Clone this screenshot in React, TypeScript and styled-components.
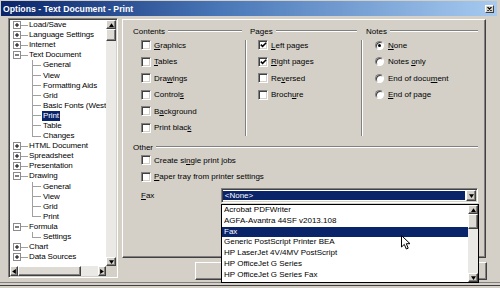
import React from "react";
import styled, { createGlobalStyle } from "styled-components";

const GlobalStyle = createGlobalStyle`
  html, body { margin: 0; padding: 0; }
  body {
    background: #d4d0c8;
    font-family: "Liberation Sans", Arial, sans-serif;
    font-size: 8px;
    color: #000;
  }
`;

const Window = styled.div`
  position: relative;
  width: 500px;
  height: 288px;
  overflow: hidden;
  background: #d4d0c8;
  display: flex;
  flex-direction: column;
  box-sizing: border-box;
  padding-top: 1px;
`;

const TitleBar = styled.div`
  height: 15px;
  margin: 0 3px 0 1px;
  display: flex;
  align-items: center;
  justify-content: space-between;
  padding: 0 3px 0 2px;
  background: linear-gradient(to right, #0a246a 0%, #4a78b8 45%, #a6caf0 100%);
  color: #fff;
  font-weight: bold;
  font-size: 8.7px;
`;

const CloseButton = styled.span`
  width: 9px;
  height: 8px;
  box-sizing: border-box;
  background: #d4d0c8;
  border: 1px solid;
  border-color: #fff #404040 #404040 #fff;
  display: flex;
  align-items: center;
  justify-content: center;
`;

const Body = styled.div`
  height: 266px;
  display: flex;
  align-items: flex-start;
  gap: 4px;
  padding: 2px 0 0 8px;
  box-sizing: border-box;
`;

const BottomEdge = styled.div`
  height: 2px;
  border-top: 1px solid #808080;
  border-bottom: 1px solid #404040;
`;

/* ---------- tree ---------- */

const TreePanel = styled.div`
  width: 110px;
  height: 260px;
  box-sizing: border-box;
  border: 1px solid;
  border-color: #808080 #fff #fff #808080;
  box-shadow: inset 1px 1px 0 #404040, inset -1px -1px 0 #d4d0c8;
  background: #fff;
  padding: 1px;
  display: grid;
  grid-template-columns: 1fr 10px;
  grid-template-rows: 1fr 10px;
`;

const TreeList = styled.div`
  overflow: hidden;
  white-space: nowrap;
`;

const TreeRow = styled.div<{ $child?: boolean }>`
  height: 10.1px;
  display: flex;
  align-items: center;
  padding-left: ${(p) => (p.$child ? "22px" : "3px")};
`;

const Expander = styled.span`
  width: 8px;
  height: 8px;
  box-sizing: border-box;
  border: 1px solid #8c8c8c;
  background: #fff;
  flex: none;
  display: flex;
  align-items: center;
  justify-content: center;
`;

const Stub = styled.span`
  width: 7px;
  height: 1px;
  background: #a0a0a0;
  flex: none;
`;

const Connector = styled.span<{ $last?: boolean }>`
  width: 9px;
  height: 100%;
  flex: none;
  background:
    linear-gradient(#a0a0a0, #a0a0a0) left top / 1px ${(p) => (p.$last ? "50%" : "100%")} no-repeat,
    linear-gradient(#a0a0a0, #a0a0a0) left center / 100% 1px no-repeat;
`;

const NodeText = styled.span<{ $selected?: boolean; $child?: boolean }>`
  margin-left: ${(p) => (p.$child ? "1px" : "0")};
  padding: 0 1px;
  line-height: 10px;
  letter-spacing: -0.1px;
  background: ${(p) => (p.$selected ? "#0a246a" : "transparent")};
  color: ${(p) => (p.$selected ? "#fff" : "#000")};
`;

const ScrollBtn = styled.span`
  box-sizing: border-box;
  background: #d4d0c8;
  border: 1px solid;
  border-color: #fff #404040 #404040 #fff;
  box-shadow: inset -1px -1px 0 #808080;
  flex: none;
  display: flex;
  align-items: center;
  justify-content: center;
`;

const VScroll = styled.div`
  display: flex;
  flex-direction: column;
  background: #ebe9e5;
`;

const HScroll = styled.div`
  display: flex;
  background: #ebe9e5;
`;

const VBtn = styled(ScrollBtn)`
  height: 9px;
  width: 100%;
`;

const HBtn = styled(ScrollBtn)`
  width: 8px;
  height: 100%;
`;

const Thumb = styled(ScrollBtn)<{ $size: number; $vertical?: boolean }>`
  ${(p) => (p.$vertical ? `height: ${p.$size}px; width: 100%;` : `width: ${p.$size}px; height: 100%;`)}
  background: #dedbd5;
`;

const Track = styled.span`
  flex: 1;
`;

const Corner = styled.div`
  background: #d4d0c8;
`;

/* ---------- right side ---------- */

const RightColumn = styled.div`
  width: 364px;
  display: flex;
  flex-direction: column;
`;

const Panel = styled.div`
  height: 239px;
  margin-top: 1px;
  box-sizing: border-box;
  border: 1px solid;
  border-color: #fff #404040 #404040 #fff;
  box-shadow: inset -1px -1px 0 #808080;
  padding: 6px 7px 0 10px;
  display: flex;
  flex-direction: column;
`;

const Groups = styled.div`
  display: grid;
  grid-template-columns: 109px 8px 107px 9px 1fr;
  grid-template-rows: 10px auto;
`;

const GroupHeader = styled.div<{ $col?: number }>`
  grid-column: ${(p) => p.$col ?? "auto"};
  display: flex;
  align-items: center;
  height: 10px;
`;

const EtchedLine = styled.span`
  flex: 1;
  height: 0;
  margin-left: 3px;
  border-top: 1px solid #808080;
  border-bottom: 1px solid #fff;
`;

const Separator = styled.div<{ $col: number }>`
  grid-row: 2;
  grid-column: ${(p) => p.$col};
  margin-top: 4px;
  display: flex;
  justify-content: center;
  &::before {
    content: "";
    width: 0;
    border-left: 1px solid #808080;
    border-right: 1px solid #fff;
  }
`;

const GroupBody = styled.div<{ $col: number }>`
  grid-row: 2;
  grid-column: ${(p) => p.$col};
  padding-top: 1px;
  display: flex;
  flex-direction: column;
`;

const OptionRow = styled.div<{ $indent?: number }>`
  height: 16.5px;
  display: flex;
  align-items: center;
  gap: 3px;
  padding-left: ${(p) => p.$indent ?? 8}px;
  white-space: nowrap;
`;

const Box = styled.span`
  width: 10px;
  height: 10px;
  box-sizing: border-box;
  flex: none;
  border: 1px solid;
  border-color: #808080 #fff #fff #808080;
  box-shadow: inset 1px 1px 0 #404040, inset -1px -1px 0 #d4d0c8;
  background: #fff;
  display: flex;
  align-items: center;
  justify-content: center;
`;

const Radio = styled.span<{ $on?: boolean }>`
  width: 9px;
  height: 9px;
  box-sizing: border-box;
  flex: none;
  border-radius: 50%;
  border: 1px solid;
  border-color: #808080 #fff #fff #808080;
  box-shadow: inset 1px 1px 0 #404040;
  background: #fff;
  display: flex;
  align-items: center;
  justify-content: center;
  margin-right: 1px;
  &::after {
    content: "";
    width: 3px;
    height: 3px;
    border-radius: 50%;
    background: ${(p) => (p.$on ? "#000" : "transparent")};
  }
`;

const OtherSection = styled.div`
  margin-top: 6px;
  display: flex;
  flex-direction: column;
`;

const FaxRow = styled.div`
  margin-top: 3px;
  height: 15px;
  display: flex;
  align-items: center;
`;

const FaxLabel = styled.span`
  width: 88px;
  padding-left: 8px;
  box-sizing: border-box;
`;

const Combo = styled.div`
  width: 258px;
  height: 15px;
  box-sizing: border-box;
  border: 1px solid;
  border-color: #808080 #fff #fff #808080;
  box-shadow: inset 1px 1px 0 #404040, inset -1px -1px 0 #d4d0c8;
  background: #fff;
  padding: 1px;
  display: flex;
`;

const ComboValue = styled.span`
  flex: 1;
  margin: 1px 1px 1px 0;
  background: #0a246a;
  color: #fff;
  padding-left: 2px;
  line-height: 10px;
`;

const ComboBtn = styled(ScrollBtn)`
  width: 10px;
  height: 100%;
`;

const ButtonRow = styled.div`
  margin-top: 4px;
  display: flex;
  justify-content: flex-end;
  gap: 4px;
  margin-right: -1px;
`;

/* the dialog's OK / Cancel / Help / Back buttons, all hidden under the open list */
const DialogButton = styled.span`
  width: 70px;
  height: 18px;
  box-sizing: border-box;
  border: 1px solid;
  border-color: #fff #404040 #404040 #fff;
  box-shadow: inset -1px -1px 0 #808080;
`;

/* ---------- dropdown list (popup over the dialog) ---------- */

const DropList = styled.div`
  position: absolute;
  left: 221px;
  top: 204px;
  width: 258px;
  height: 79px;
  box-sizing: border-box;
  border: 1px solid #000;
  background: #fff;
  display: flex;
`;

const Items = styled.div`
  flex: 1;
  overflow: hidden;
  white-space: nowrap;
`;

const Item = styled.div<{ $selected?: boolean }>`
  height: 10.8px;
  line-height: 10.8px;
  padding-left: 2px;
  background: ${(p) => (p.$selected ? "#0a246a" : "transparent")};
  color: ${(p) => (p.$selected ? "#fff" : "#000")};
`;

const ListScroll = styled(VScroll)`
  width: 10px;
`;

const Cursor = styled.svg`
  position: absolute;
  left: 401px;
  top: 235px;
`;

const Arrow = ({ dir }: { dir: "up" | "down" | "left" | "right" }) => {
  const pts = {
    up: "0,3 2,0 4,3",
    down: "0,0 4,0 2,3",
    left: "3,0 3,4 0,2",
    right: "0,0 0,4 3,2",
  }[dir];
  const vertical = dir === "up" || dir === "down";
  return (
    <svg width={vertical ? 5 : 4} height={vertical ? 4 : 5} viewBox={vertical ? "0 0 4 3" : "0 0 3 4"}>
      <polygon points={pts} fill="#000" />
    </svg>
  );
};

const Check = () => (
  <svg width="7" height="6" viewBox="0 0 7 6">
    <path d="M0.8 2.6 L2.6 4.4 L6.2 0.8" stroke="#000" strokeWidth="1.5" fill="none" />
  </svg>
);

const PlusMinus = ({ open }: { open: boolean }) => (
  <svg width="6" height="6" viewBox="0 0 6 6">
    <rect x="1" y="2.5" width="4" height="1" fill="#000" />
    {!open && <rect x="2.5" y="1" width="1" height="4" fill="#000" />}
  </svg>
);

type Node = { label: string; open?: boolean; children?: string[] };

const tree: Node[] = [
  { label: "Load/Save" },
  { label: "Language Settings" },
  { label: "Internet" },
  {
    label: "Text Document",
    open: true,
    children: ["General", "View", "Formatting Aids", "Grid", "Basic Fonts (Weste", "Print", "Table", "Changes"],
  },
  { label: "HTML Document" },
  { label: "Spreadsheet" },
  { label: "Presentation" },
  { label: "Drawing", open: true, children: ["General", "View", "Grid", "Print"] },
  { label: "Formula", open: true, children: ["Settings"] },
  { label: "Chart" },
  { label: "Data Sources" },
];

const faxList = [
  "Acrobat PDFWriter",
  "AGFA-Avantra 44SF v2013.108",
  "Fax",
  "Generic PostScript Printer BEA",
  "HP LaserJet 4V/4MV PostScript",
  "HP OfficeJet G Series",
  "HP OfficeJet G Series Fax",
];

function Option({ checked, children }: { checked?: boolean; children: React.ReactNode }) {
  return (
    <OptionRow>
      <Box>{checked && <Check />}</Box>
      <span>{children}</span>
    </OptionRow>
  );
}

function RadioOption({ on, children }: { on?: boolean; children: React.ReactNode }) {
  return (
    <OptionRow $indent={9}>
      <Radio $on={on} />
      <span>{children}</span>
    </OptionRow>
  );
}

export default function App() {
  return (
    <>
      <GlobalStyle />
      <Window>
        <TitleBar>
          <span>Options - Text Document - Print</span>
          <CloseButton>
            <svg width="5" height="4" viewBox="0 0 5 4">
              <path d="M0.5 0 L4.5 4 M4.5 0 L0.5 4" stroke="#000" strokeWidth="1.1" />
            </svg>
          </CloseButton>
        </TitleBar>

        <Body>
          <TreePanel>
            <TreeList>
              {tree.map((node) => (
                <React.Fragment key={node.label}>
                  <TreeRow>
                    <Expander>
                      <PlusMinus open={!!node.open} />
                    </Expander>
                    <Stub />
                    <NodeText>{node.label}</NodeText>
                  </TreeRow>
                  {node.children?.map((child, i) => (
                    <TreeRow $child key={node.label + child}>
                      <Connector $last={i === node.children!.length - 1} />
                      <NodeText $child $selected={node.label === "Text Document" && child === "Print"}>
                        {child}
                      </NodeText>
                    </TreeRow>
                  ))}
                </React.Fragment>
              ))}
            </TreeList>
            <VScroll>
              <VBtn>
                <Arrow dir="up" />
              </VBtn>
              <Thumb $vertical $size={12} />
              <Track />
              <VBtn>
                <Arrow dir="down" />
              </VBtn>
            </VScroll>
            <HScroll>
              <HBtn>
                <Arrow dir="left" />
              </HBtn>
              <Thumb $size={63} />
              <Track />
              <HBtn>
                <Arrow dir="right" />
              </HBtn>
            </HScroll>
            <Corner />
          </TreePanel>

          <RightColumn>
            <Panel>
              <Groups>
                <GroupHeader $col={1}>
                  <span>Contents</span>
                  <EtchedLine />
                </GroupHeader>
                <GroupHeader $col={3}>
                  <span>Pages</span>
                  <EtchedLine />
                </GroupHeader>
                <GroupHeader $col={5}>
                  <span>Notes</span>
                  <EtchedLine />
                </GroupHeader>

                <GroupBody $col={1}>
                  <Option><u>G</u>raphics</Option>
                  <Option><u>T</u>ables</Option>
                  <Option>Dra<u>w</u>ings</Option>
                  <Option>Control<u>s</u></Option>
                  <Option>B<u>a</u>ckground</Option>
                  <Option>Print blac<u>k</u></Option>
                </GroupBody>
                <Separator $col={2} />
                <GroupBody $col={3}>
                  <Option checked><u>L</u>eft pages</Option>
                  <Option checked><u>R</u>ight pages</Option>
                  <Option>Re<u>v</u>ersed</Option>
                  <Option>Broch<u>u</u>re</Option>
                </GroupBody>
                <Separator $col={4} />
                <GroupBody $col={5}>
                  <RadioOption on><u>N</u>one</RadioOption>
                  <RadioOption>Notes <u>o</u>nly</RadioOption>
                  <RadioOption>End of docu<u>m</u>ent</RadioOption>
                  <RadioOption><u>E</u>nd of page</RadioOption>
                </GroupBody>
              </Groups>

              <OtherSection>
                <GroupHeader>
                  <span>Other</span>
                  <EtchedLine />
                </GroupHeader>
                <Option>Create si<u>n</u>gle print jobs</Option>
                <Option><u>P</u>aper tray from printer settings</Option>
                <FaxRow>
                  <FaxLabel><u>F</u>ax</FaxLabel>
                  <Combo>
                    <ComboValue>&lt;None&gt;</ComboValue>
                    <ComboBtn>
                      <Arrow dir="down" />
                    </ComboBtn>
                  </Combo>
                </FaxRow>
              </OtherSection>
            </Panel>

            <ButtonRow>
              <DialogButton />
              <DialogButton />
              <DialogButton />
              <DialogButton />
            </ButtonRow>
          </RightColumn>
        </Body>
        <BottomEdge />

        <DropList>
          <Items>
            {faxList.map((name) => (
              <Item key={name} $selected={name === "Fax"}>
                {name}
              </Item>
            ))}
          </Items>
          <ListScroll>
            <VBtn>
              <Arrow dir="up" />
            </VBtn>
            <Thumb $vertical $size={15} />
            <Track />
            <VBtn>
              <Arrow dir="down" />
            </VBtn>
          </ListScroll>
        </DropList>

        <Cursor width="11" height="15" viewBox="0 0 11 15">
          <path d="M0.5 0.5 L0.5 12 L3.3 9.4 L5.3 14 L7.2 13.2 L5.3 8.7 L9 8.7 Z" fill="#fff" stroke="#000" strokeWidth="1" />
        </Cursor>
      </Window>
    </>
  );
}
